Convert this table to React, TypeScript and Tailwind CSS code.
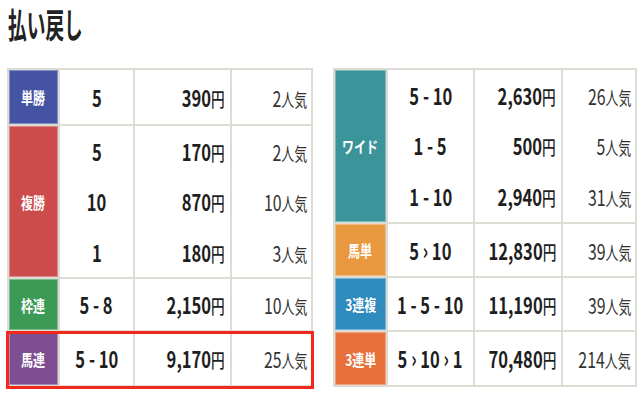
type Row = {
  label?: string;
  color?: string;
  span?: number;
  num: string;
  pay: string;
  pop: string;
  h: string;
};

const left: Row[] = [
  { label: "単勝", color: "bg-[#4553a5]", span: 1, num: "5", pay: "390", pop: "2", h: "h-[56px]" },
  { label: "複勝", color: "bg-[#cc4b4b]", span: 3, num: "5", pay: "170", pop: "2", h: "h-[51px]" },
  { num: "10", pay: "870", pop: "10", h: "h-[51px]" },
  { num: "1", pay: "180", pop: "3", h: "h-[51px]" },
  { label: "枠連", color: "bg-[#3b9a55]", span: 1, num: "5 - 8", pay: "2,150", pop: "10", h: "h-[53px]" },
  { label: "馬連", color: "bg-[#7d4f92]", span: 1, num: "5 - 10", pay: "9,170", pop: "25", h: "h-[55px]" },
];

const right: Row[] = [
  { label: "ワイド", color: "bg-[#3a9499]", span: 3, num: "5 - 10", pay: "2,630", pop: "26", h: "h-[51px]" },
  { num: "1 - 5", pay: "500", pop: "5", h: "h-[51px]" },
  { num: "1 - 10", pay: "2,940", pop: "31", h: "h-[52px]" },
  { label: "馬単", color: "bg-[#e8993f]", span: 1, num: "5 › 10", pay: "12,830", pop: "39", h: "h-[54px]" },
  { label: "3連複", color: "bg-[#2f8bbd]", span: 1, num: "1 - 5 - 10", pay: "11,190", pop: "39", h: "h-[54px]" },
  { label: "3連単", color: "bg-[#e8703a]", span: 1, num: "5 › 10 › 1", pay: "70,480", pop: "214", h: "h-[55px]" },
];

function PayTable({ rows, cols }: { rows: Row[]; cols: number[] }) {
  return (
    <table className="border-collapse table-fixed bg-white" style={{ width: cols.reduce((a, b) => a + b, 0) }}>
      <colgroup>
        {cols.map((w, i) => (
          <col key={i} style={{ width: w }} />
        ))}
      </colgroup>
      <tbody>
        {rows.map((r, i) => {
          const first = r.label !== undefined;
          const last = i === rows.length - 1 || rows[i + 1].label !== undefined;
          const edge = `${first ? "border-t-2" : "border-t-0"} ${last ? "border-b-2" : "border-b-0"}`;
          return (
            <tr key={i} className={r.h}>
              {first && (
                <td
                  rowSpan={r.span}
                  className={`${r.color} border-2 border-[#dcdcd4] text-center align-middle shadow-[inset_0_0_0_1px_rgba(255,255,255,0.35)]`}
                >
                  <span className="inline-block scale-x-[0.75] text-[16px] font-bold text-white whitespace-nowrap">{r.label}</span>
                </td>
              )}
              <td className={`border-x-2 ${edge} border-[#dcdcd4] align-middle`}>
                <div className="flex justify-center">
                  <span className="shrink-0 scale-x-[0.72] text-[23px] font-semibold text-[#1e1e1e] whitespace-nowrap">{r.num}</span>
                </div>
              </td>
              <td className={`border-x-2 ${edge} border-[#dcdcd4] align-middle pr-[5px]`}>
                <div className="flex justify-end">
                  <span className="shrink-0 origin-right scale-x-[0.72] text-[23px] font-semibold text-[#1e1e1e] whitespace-nowrap">
                    {r.pay}
                    <span className="text-[19px] font-medium">円</span>
                  </span>
                </div>
              </td>
              <td className={`border-x-2 ${edge} border-[#dcdcd4] align-middle pr-[4px]`}>
                <div className="flex justify-end">
                  <span className="shrink-0 origin-right scale-x-[0.72] text-[22px] text-[#333] whitespace-nowrap">
                    {r.pop}
                    <span className="text-[18px]">人気</span>
                  </span>
                </div>
              </td>
            </tr>
          );
        })}
      </tbody>
    </table>
  );
}

export default function App() {
  return (
    <div className="w-[640px] h-[400px] bg-white font-['Noto_Sans_CJK_JP',sans-serif] overflow-hidden">
      <h2 className="pl-[8px] pt-[2px] h-[68px] leading-[44px]">
        <span className="inline-block origin-left scale-x-[0.55] text-[34px] font-bold text-[#222]">払い戻し</span>
      </h2>
      <div className="flex gap-[20px] pl-[7px]">
        <div className="relative">
          <PayTable rows={left} cols={[51, 75, 97, 81]} />
          <div className="absolute left-[-1px] right-[-1px] bottom-[-2px] h-[58px] border-[3px] border-[#f2281c]" />
        </div>
        <PayTable rows={right} cols={[53, 87, 88, 74]} />
      </div>
    </div>
  );
}
